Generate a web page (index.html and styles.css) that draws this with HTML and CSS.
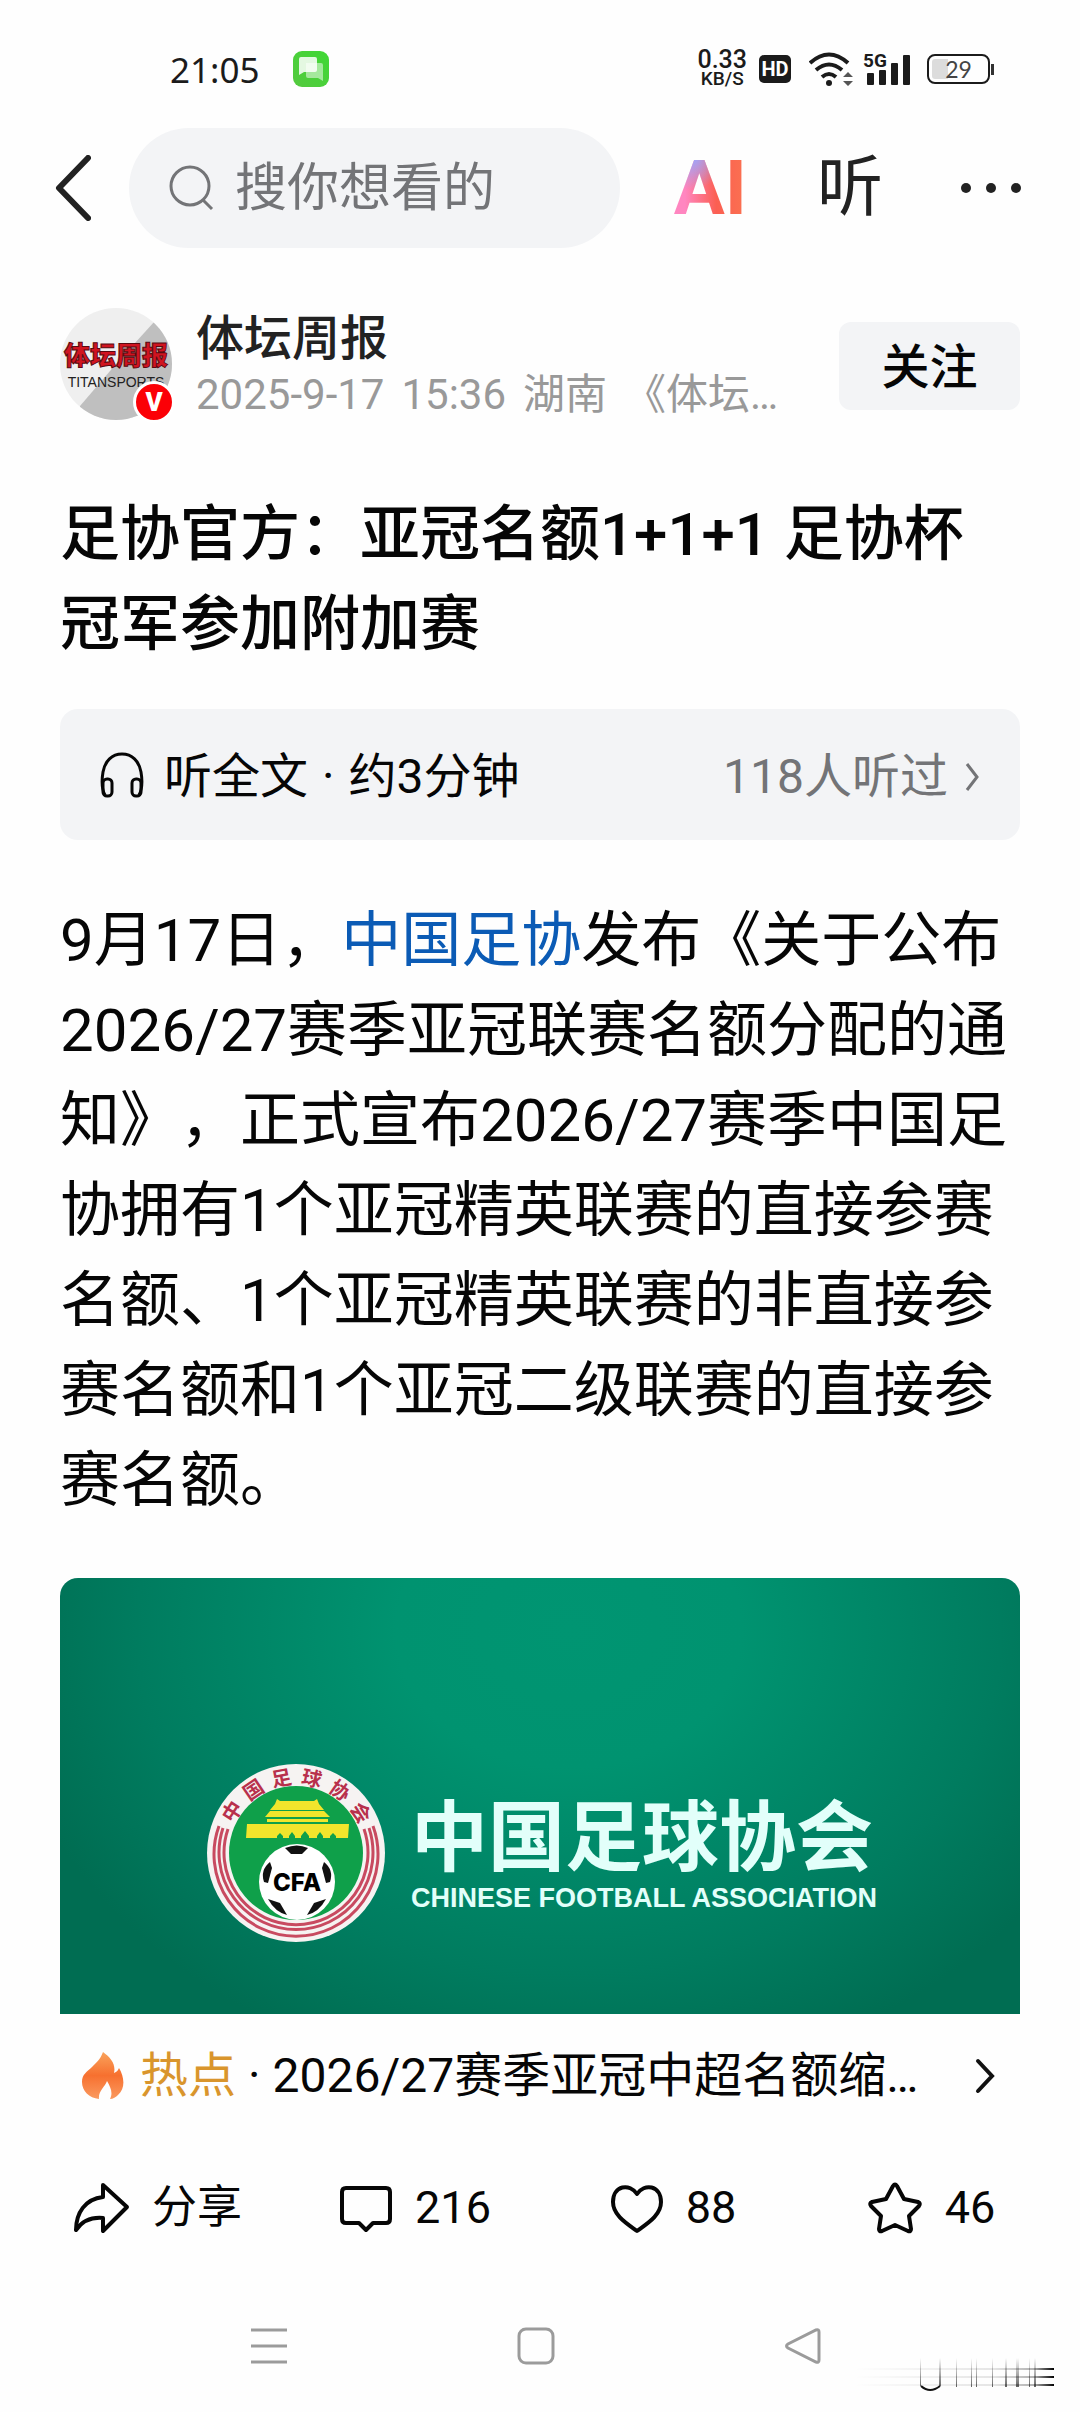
FILE: index.html
```html
<!DOCTYPE html>
<html lang="zh-CN">
<head>
    <meta charset="utf-8">
    <meta name="viewport" content="width=device-width, initial-scale=1">
    <title>足协官方：亚冠名额1+1+1</title>
    <link rel="stylesheet" href="styles.css">
</head>
<body>
    <div class="status-bar">
        <div class="status-left">
            <span class="clock">21:05</span>
            <svg class="sms-icon" viewBox="0 0 36 36">
                <defs>
                    <linearGradient id="smsFill" x1="0" y1="1" x2="1" y2="0">
                        <stop offset="0" stop-color="#55c93f"/>
                        <stop offset="1" stop-color="#3fd835"/>
                    </linearGradient>
                </defs>
                <rect width="36" height="36" rx="9" fill="url(#smsFill)"/>
                <path d="M13 12h15q2 0 2 2v16l-5-3H15q-2 0-2-2z" fill="#fff" opacity=".5"/>
                <path d="M8 6h14q2 0 2 2v11q0 2-2 2H11l-5 3V8q0-2 2-2z" fill="#fff" opacity=".85"/>
            </svg>
        </div>
        <div class="status-right">
            <div class="net-speed"><span class="speed-num">0.33</span><span class="speed-unit">KB/S</span></div>
            <span class="hd-badge">HD</span>
            <svg class="wifi-icon" viewBox="0 0 46 34">
                <g fill="none" stroke="#1b1b1b" stroke-width="4">
                    <path d="M1 11q19-17 38 0"/>
                    <path d="M7 18q13-11 26 0"/>
                    <path d="M13 25q7-6 14 0"/>
                </g>
                <circle cx="20" cy="31" r="3" fill="#1b1b1b"/>
                <path d="M34 25l5-5 5 5zM34 29l5 5 5-5z" fill="#555"/>
            </svg>
            <div class="signal">
                <span class="signal-type">5G</span>
                <svg class="signal-bars" viewBox="0 0 44 32" fill="#1b1b1b">
                    <rect x="0" y="20" width="7" height="12" rx="1"/>
                    <rect x="12" y="17" width="7" height="15" rx="1"/>
                    <rect x="24" y="10" width="7" height="22" rx="1"/>
                    <rect x="36" y="2" width="7" height="30" rx="1"/>
                </svg>
            </div>
            <div class="battery"><span class="battery-body">29</span><span class="battery-tip"></span></div>
        </div>
    </div>

    <header class="top-bar">
        <button class="icon-button" aria-label="返回">
            <svg class="back-icon" viewBox="0 0 36 66"><path d="M33 3L4 33l29 30"/></svg>
        </button>
        <label class="search-box">
            <svg class="search-icon" viewBox="0 0 46 46"><circle cx="21" cy="21" r="19"/><path d="M34 35l9 9"/></svg>
            <input class="search-input" type="text" placeholder="搜你想看的" aria-label="搜索">
        </label>
        <div class="top-actions">
            <button class="icon-button ai-button">AI</button>
            <button class="icon-button listen-button">听</button>
            <button class="icon-button" aria-label="更多">
                <svg class="more-icon" viewBox="0 0 62 12"><circle cx="6" cy="6" r="5"/><circle cx="31" cy="6" r="5"/><circle cx="56" cy="6" r="5"/></svg>
            </button>
        </div>
    </header>

    <main class="article">
        <div class="author">
            <div class="avatar">
                <svg class="avatar-image" viewBox="0 0 112 112">
                    <clipPath id="round"><circle cx="56" cy="56" r="56"/></clipPath>
                    <g clip-path="url(#round)">
                        <rect width="112" height="112" fill="#efefef"/>
                        <path d="M94 14L56 56 20 98v14h92V14z" fill="#bfbfbf"/>
                    </g>
                    <text class="avatar-name" x="56" y="57">体坛周报</text>
                    <text class="avatar-sub" x="56" y="79">TITANSPORTS</text>
                </svg>
                <span class="verified">V</span>
            </div>
            <div class="author-info">
                <div class="author-name">体坛周报</div>
                <div class="author-meta"><span>2025-9-17</span><span>15:36</span><span>湖南</span><span>《体坛…</span></div>
            </div>
            <button class="follow-button">关注</button>
        </div>

        <h1 class="title">足协官方：亚冠名额1+1+1 足协杯冠军参加附加赛</h1>

        <button class="listen-bar">
            <svg class="headphone-icon" viewBox="0 0 44 48">
                <path d="M5 44C1 37 2 27 3 21 5 10 12 3 22 3s17 7 19 18c1 6 2 16-2 23"/>
                <rect x="3" y="28" width="9" height="17" rx="4"/>
                <rect x="32" y="28" width="9" height="17" rx="4"/>
            </svg>
            <span>听全文</span>
            <span class="dot">·</span>
            <span>约3分钟</span>
            <span class="listen-count">118人听过</span>
            <svg class="small-chevron" viewBox="0 0 16 32"><path d="M3 3l10 13L3 29"/></svg>
        </button>

        <p class="text">9月17日，<a href="#">中国足协</a>发布《关于公布2026/27赛季亚冠联赛名额分配的通知》，正式宣布2026/27赛季中国足协拥有1个亚冠精英联赛的直接参赛名额、1个亚冠精英联赛的非直接参赛名额和1个亚冠二级联赛的直接参赛名额。</p>

        <div class="banner">
            <svg class="emblem" viewBox="0 0 178 178">
                <circle cx="89" cy="89" r="89" fill="#f6f3f2"/>
                <g fill="none" stroke="#c84a60" stroke-width="3">
                    <path d="M12 62a82 82 0 1 0 154 0"/>
                    <path d="M16 64a77 77 0 1 0 146 0"/>
                    <path d="M21 65a72 72 0 1 0 136 0"/>
                </g>
                <circle cx="89" cy="89" r="67" fill="#0fa04a"/>
                <g class="ring-text">
                    <text x="89" y="20" transform="rotate(-57 89 89)">中</text>
                    <text x="89" y="20" transform="rotate(-34 89 89)">国</text>
                    <text x="89" y="20" transform="rotate(-11 89 89)">足</text>
                    <text x="89" y="20" transform="rotate(12 89 89)">球</text>
                    <text x="89" y="20" transform="rotate(35 89 89)">协</text>
                    <text x="89" y="20" transform="rotate(58 89 89)">会</text>
                </g>
                <g fill="#f2e52c">
                    <path d="M70 35l3 2h34l3-2 2 5 5 6H63l5-6z"/>
                    <path d="M63 47h54l6 6H58z"/>
                    <path d="M60 55h61v3H60z"/>
                    <path d="M40 60h102l-1 14h-12v-2l-3-3-3 3v2h-7v-2l-3-4-3 4v2h-8v-2l-4-5-4 5v2h-6v-2l-3-4-3 4v2h-6v-2l-3-3-3 3v2H39z"/>
                </g>
                <circle cx="90" cy="118" r="38" fill="#fff"/>
                <g fill="#111">
                    <path d="M78 84q12-5 23 0l-6 6H84z"/>
                    <path d="M63 98l2 6-4 15-4-1q-4-12 6-20z"/>
                    <path d="M117 98l-2 6 4 15 4-1q4-12-6-20z"/>
                    <path d="M61 135l12 4 7 12q-12-3-19-16z"/>
                    <path d="M119 135l-12 4-7 12q12-3 19-16z"/>
                </g>
                <text class="ball-text" x="90" y="127">CFA</text>
            </svg>
            <div class="banner-text">
                <div class="banner-cn">中国足球协会</div>
                <div class="banner-en">CHINESE FOOTBALL ASSOCIATION</div>
            </div>
        </div>

        <a class="hot-row" href="#">
            <svg class="flame-icon" viewBox="0 0 44 50">
                <defs>
                    <linearGradient id="flameFill" x1="0" y1="0" x2="0" y2="1">
                        <stop offset="0" stop-color="#f9a35c"/>
                        <stop offset=".5" stop-color="#f7702f"/>
                        <stop offset="1" stop-color="#fa9a60"/>
                    </linearGradient>
                </defs>
                <path d="M22 1c8 6 13 12 11 21 3-1 4-3 5-5 5 8 7 20-1 27-2 2-5 4-8 4 3-6 1-11-3-18-2 6-9 10-8 18C8 47 1 40 1 31c0-8 5-10 10-15 4-4 8-7 11-15z" fill="url(#flameFill)"/>
            </svg>
            <span class="hot-label">热点</span>
            <span>·</span>
            <span class="hot-title">2026/27赛季亚冠中超名额缩…</span>
            <svg class="chevron" viewBox="0 0 20 36"><path d="M3 3l14 15L3 33"/></svg>
        </a>
    </main>

    <div class="actions">
        <button class="action">
            <svg viewBox="0 0 58 52"><path d="M31 3l24 22-24 24V36C20 35 11 38 4 48 4 31 13 17 31 15z"/></svg>
            <span>分享</span>
        </button>
        <button class="action">
            <svg viewBox="0 0 54 52"><path d="M7 6h40q4 0 4 4v27q0 4-4 4H34l-7 7-7-7H7q-4 0-4-4V10q0-4 4-4z"/></svg>
            <span>216</span>
        </button>
        <button class="action">
            <svg viewBox="0 0 54 52"><path d="M27 12C20 1 3 3 3 20c0 13 13 21 24 29 11-8 24-16 24-29C51 3 34 1 27 12z"/></svg>
            <span>88</span>
        </button>
        <button class="action">
            <svg viewBox="0 0 56 52"><path d="M26 4q2-3 4 0l7 13 14 3q3 1 1 4L42 34l2 13q0 3-3 2l-13-6-13 6q-3 1-3-2l2-13L4 24q-2-3 1-4l14-3z"/></svg>
            <span>46</span>
        </button>
    </div>

    <nav class="system-nav">
        <button class="icon-button" aria-label="任务"><svg class="nav-icon" viewBox="0 0 38 38"><path d="M1 3h36M1 19h36M1 35h36"/></svg></button>
        <button class="icon-button" aria-label="主页"><svg class="nav-icon" viewBox="0 0 38 38"><rect x="2" y="2" width="34" height="34" rx="7"/></svg></button>
        <button class="icon-button" aria-label="后退"><svg class="nav-icon" viewBox="0 0 38 38"><path d="M32 3q3-1 3 2v28q0 3-3 2L4 21q-3-2 0-4z"/></svg></button>
        <svg class="corner-mark" viewBox="0 0 204 36">
            <defs>
                <linearGradient id="fadeRight" x1="0" y1="0" x2="1" y2="0">
                    <stop offset="0" stop-color="#000" stop-opacity="0"/>
                    <stop offset=".7" stop-color="#000" stop-opacity=".1"/>
                    <stop offset=".9" stop-color="#000" stop-opacity=".3"/>
                    <stop offset="1" stop-color="#000"/>
                </linearGradient>
                <linearGradient id="fadeDown" x1="0" y1="0" x2="0" y2="1">
                    <stop offset="0" stop-color="#000" stop-opacity="0"/>
                    <stop offset="1" stop-color="#000" stop-opacity=".6"/>
                </linearGradient>
            </defs>
            <path d="M0 12h200v2H0zM0 20h200v2H0zM0 28h200v2H0z" fill="url(#fadeRight)"/>
            <path d="M66 2h1v28h-1zM85 2h2v28h-2zM102 2h1v29h-1zM117 2h1v29h-1zM122 2h1v29h-1zM138 2h1v29h-1zM151 2h2v29h-2zM162 2h3v29h-3zM175 2h1v29h-1zM180 2h2v29h-2z" fill="url(#fadeDown)"/>
            <path d="M67 30q9 8 19 0" fill="none" stroke="#111" stroke-width="2"/>
        </svg>
    </nav>
</body>
</html>
```
FILE: styles.css
```css
* {
    box-sizing: border-box;
}
body {
    margin: 0;
    background-color: #fefefe;
    color: #060606;
    font-family: Roboto, "Noto Sans CJK SC", sans-serif;
    text-spacing-trim: space-all;
}
button {
    border: none;
    padding: 0;
    background: none;
    color: inherit;
    font: inherit;
    cursor: pointer;
}
svg {
    display: block;
    flex: none;
}

/* status bar */
.status-bar {
    display: flex;
    justify-content: space-between;
    align-items: center;
    height: 128px;
    padding: 10px 86px 0 170px;
    color: #1b1b1b;
}
.status-left {
    display: flex;
    align-items: center;
    gap: 34px;
}
.clock {
    font-family: "Noto Sans", sans-serif;
    font-size: 35px;
}
.sms-icon {
    width: 36px;
    height: 36px;
}
.status-right {
    display: flex;
    align-items: center;
    gap: 12px;
}
.net-speed {
    display: flex;
    flex-direction: column;
    align-items: center;
    font-weight: 500;
}
.speed-num {
    font-size: 25px;
    line-height: 20px;
}
.speed-unit {
    font-size: 19px;
    line-height: 18px;
}
.hd-badge {
    width: 32px;
    margin-right: 6px;
    border-radius: 5px;
    background-color: #1b1b1b;
    color: #fff;
    font-size: 20px;
    font-weight: 700;
    line-height: 28px;
    text-align: center;
}
.wifi-icon {
    width: 46px;
    height: 34px;
}
.signal {
    position: relative;
}
.signal-type {
    position: absolute;
    top: -1px;
    left: -4px;
    background-color: #fefefe;
    font-size: 19px;
    font-weight: 700;
    line-height: 18px;
}
.signal-bars {
    width: 44px;
    height: 32px;
}
.battery {
    display: flex;
    align-items: center;
    gap: 1px;
    margin-left: 4px;
}
.battery-body {
    width: 63px;
    border: 2px solid #1b1b1b;
    border-radius: 8px;
    background: linear-gradient(to right, #dcdcdc 30%, transparent 30%) content-box;
    padding: 3px;
    font-family: Lato, sans-serif;
    font-size: 23px;
    line-height: 20px;
    text-align: center;
    color: #444;
}
.battery-tip {
    width: 3px;
    height: 11px;
    background-color: #333;
}

/* top bar */
.top-bar {
    display: flex;
    align-items: center;
    padding: 0 58px 0 55px;
    color: #222;
}
.back-icon {
    width: 36px;
    height: 66px;
    fill: none;
    stroke: #222;
    stroke-width: 6;
    stroke-linecap: round;
    stroke-linejoin: round;
}
.search-box {
    display: flex;
    flex: 1;
    align-items: center;
    gap: 20px;
    min-width: 0;
    height: 120px;
    margin: 0 54px 0 38px;
    padding: 0 40px;
    border-radius: 60px;
    background-color: #f3f4f6;
}
.search-icon {
    width: 46px;
    height: 46px;
    fill: none;
    stroke: #737477;
    stroke-width: 3;
}
.search-input {
    width: 100%;
    min-width: 0;
    border: none;
    outline: none;
    padding: 0;
    background: none;
    font: inherit;
    font-size: 52px;
}
.search-input::placeholder {
    color: #737477;
    opacity: 1;
}
.top-actions {
    display: flex;
    align-items: center;
}
.ai-button {
    margin-right: 70px;
    background: radial-gradient(circle at 25% 12%, #98a8ff 0, transparent 32px), linear-gradient(90deg, #ff86c0 15%, #fb5f52 58%, #fb7250);
    -webkit-background-clip: text;
    background-clip: text;
    color: transparent;
    font-size: 76px;
    font-weight: 700;
    line-height: 80px;
}
.listen-button {
    margin-right: 77px;
    font-size: 66px;
    line-height: 80px;
}
.more-icon {
    width: 62px;
    height: 12px;
    fill: #222;
}

/* article */
.article {
    padding: 60px 60px 0;
}
.author {
    display: flex;
    align-items: center;
    gap: 24px;
}
.avatar {
    position: relative;
}
.avatar-image {
    width: 112px;
    height: 112px;
    overflow: visible;
}
.avatar-name {
    fill: #d01420;
    stroke: #5a0a10;
    stroke-width: 1;
    font-size: 26px;
    font-weight: 900;
    text-anchor: middle;
}
.avatar-sub {
    fill: #222;
    font-family: "Liberation Sans", sans-serif;
    font-size: 14px;
    text-anchor: middle;
}
.verified {
    position: absolute;
    right: -3px;
    bottom: -3px;
    width: 42px;
    height: 42px;
    border: 3px solid #fff;
    border-radius: 50%;
    background-color: #fb0006;
    color: #fff;
    font-size: 26px;
    font-weight: 900;
    line-height: 36px;
    text-align: center;
}
.author-info {
    flex: 1;
    min-width: 0;
    padding-top: 4px;
}
.author-name {
    color: #222;
    font-size: 48px;
    font-weight: 500;
    line-height: 54px;
}
.author-meta {
    display: flex;
    gap: 17px;
    padding-top: 4px;
    color: #999;
    font-size: 42px;
    line-height: 50px;
    white-space: nowrap;
}
.follow-button {
    width: 181px;
    height: 88px;
    margin-top: 4px;
    padding-top: 4px;
    border-radius: 12px;
    background-color: #f3f4f6;
    font-size: 48px;
    font-weight: 500;
    line-height: 60px;
}
.title {
    margin: 70px 0 39px;
    font-size: 60px;
    font-weight: 500;
    line-height: 90px;
}
.listen-bar {
    display: flex;
    align-items: center;
    width: 100%;
    height: 131px;
    padding: 4px 40px 0;
    border-radius: 18px;
    background-color: #f3f4f6;
    font-size: 48px;
    line-height: 60px;
}
.headphone-icon {
    width: 44px;
    height: 48px;
    margin: 0 20px 4px 0;
    fill: none;
    stroke: #060606;
    stroke-width: 3;
}
.dot {
    margin: 0 14px;
}
.listen-count {
    margin: 0 16px 0 auto;
    color: #737477;
}
.small-chevron {
    width: 16px;
    height: 32px;
    fill: none;
    stroke: #737477;
    stroke-width: 3;
}
.text {
    margin: 56px 0 52px;
    font-size: 60px;
    line-height: 90px;
}
.text a {
    color: #0b5bb5;
    text-decoration: none;
}

/* association banner */
.banner {
    display: flex;
    align-items: center;
    gap: 26px;
    height: 436px;
    padding: 114px 0 0 147px;
    border-radius: 18px 18px 0 0;
    background: radial-gradient(ellipse 60% 105% at 53% 12%, #009572 0%, #009370 30%, #007c5f 75%, #006d52 100%);
    color: #e2fffa;
}
.emblem {
    width: 178px;
    height: 178px;
}
.ring-text {
    fill: #b8304c;
    font-size: 20px;
    font-weight: 700;
    text-anchor: middle;
}
.ball-text {
    font-family: Inter, sans-serif;
    font-size: 24px;
    font-weight: 800;
    text-anchor: middle;
}
.banner-text {
    padding-top: 10px;
    white-space: nowrap;
}
.banner-cn {
    font-size: 77px;
    font-weight: 700;
    line-height: 80px;
}
.banner-en {
    font-family: "Liberation Sans", sans-serif;
    font-size: 27px;
    font-weight: 700;
    line-height: 38px;
}

/* hot topic */
.hot-row {
    display: flex;
    align-items: center;
    height: 122px;
    padding: 2px 25px 0 21px;
    color: inherit;
    font-size: 48px;
    line-height: 60px;
    text-decoration: none;
}
.flame-icon {
    width: 44px;
    height: 50px;
    margin-right: 15px;
}
.hot-label {
    margin-right: 12px;
    color: #d9952c;
}
.hot-title {
    margin: 0 auto 0 12px;
    white-space: nowrap;
}
.chevron {
    width: 20px;
    height: 36px;
    fill: none;
    stroke: #111;
    stroke-width: 4;
    stroke-linecap: round;
}

/* bottom actions */
.actions {
    display: grid;
    grid-template-columns: repeat(4, 1fr);
    height: 144px;
    padding: 0 20px 0 28px;
}
.action {
    display: flex;
    align-items: center;
    justify-content: center;
    gap: 22px;
    font-size: 45px;
    line-height: 60px;
}
.action svg {
    height: 52px;
    fill: none;
    stroke: #060606;
    stroke-width: 4;
    stroke-linejoin: round;
}
.system-nav {
    position: relative;
    display: grid;
    grid-template-columns: repeat(3, 1fr);
    justify-items: center;
    align-items: center;
    height: 132px;
    padding: 0 144px 0 136px;
}
.nav-icon {
    width: 38px;
    height: 38px;
    fill: none;
    stroke: #9b9b9b;
    stroke-width: 3;
}
.corner-mark {
    position: absolute;
    right: 22px;
    bottom: 20px;
    width: 204px;
    height: 36px;
}
```
